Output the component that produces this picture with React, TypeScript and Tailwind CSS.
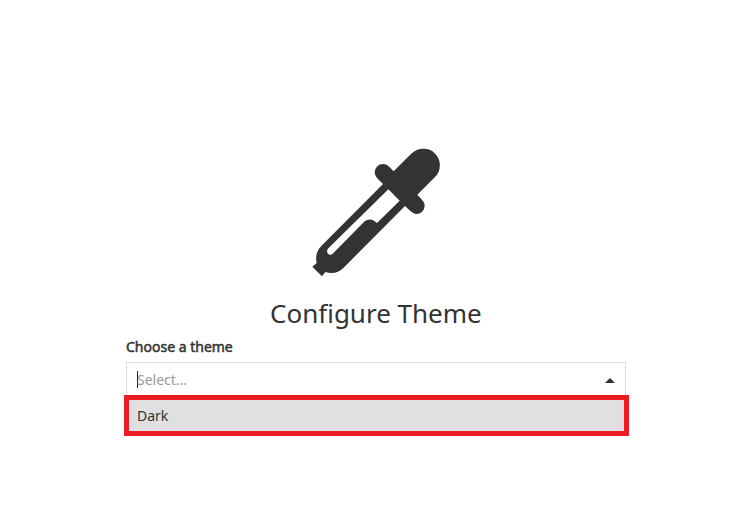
function Eyedropper() {
  return (
    <svg className="block h-[129px] w-[129px] shrink-0" viewBox="36 24 387 387" fill="#333333" aria-hidden="true">
      <path
        fillRule="evenodd"
        d="M281 94 L333 42 Q349 26 370 26 A49 49 0 0 1 419.500 75 Q420 97 405 111 L352 164 L366 179 Q374 187 374 197 A25 25 0 0 1 348 222 Q339 221 332 214 L315 198 L131 383 Q115 399 94 399 Q84 399 76 396 L66 409 L37 380 L50 369 Q43 338 66 316 L249 132 L231 114 Q224 107 224 97 A25 25 0 0 1 249 72 Q259 72 266 79 Z M265 148 L299 182 L231 249 L222 242 Q208 234 194 244 L98 341 Q90 347 84 341 Q78 333 85 325 Z"
      />
    </svg>
  );
}

export default function App() {
  return (
    <main className="flex h-[520px] w-[754px] flex-col bg-white pt-[148px] font-['Noto_Sans',sans-serif] text-[#333333]">
      <div className="flex pl-[312px]">
        <Eyedropper />
      </div>
      <h1 className="mt-[18px] h-9 pl-[270px] text-[26px] leading-9 whitespace-nowrap">Configure Theme</h1>
      <label className="mt-[6px] ml-[126px] h-5 text-sm leading-5 [-webkit-text-stroke:0.5px_#333333]">Choose a theme</label>
      <div className="mt-[5px] ml-[126px] flex h-[33px] w-[500px] items-center justify-between border border-b-0 border-[#dddddd] pr-[10px] pl-[10px]">
        <div className="flex items-center">
          <span className="-mr-px h-[17px] w-px bg-[#222222]" />
          <span className="mt-[2px] text-sm leading-5 text-[#999999]">Select...</span>
        </div>
        <svg className="mt-[3px] h-[5px] w-[10px]" viewBox="0 0 10 5" fill="#333333" aria-hidden="true">
          <path d="M0 5 5 0 10 5Z" />
        </svg>
      </div>
      <div className="ml-[124px] flex h-[41px] w-[505px] items-center border-5 border-[#ed1c24] bg-[#e0e0e0] pl-2 text-sm leading-5">
        Dark
      </div>
    </main>
  );
}
